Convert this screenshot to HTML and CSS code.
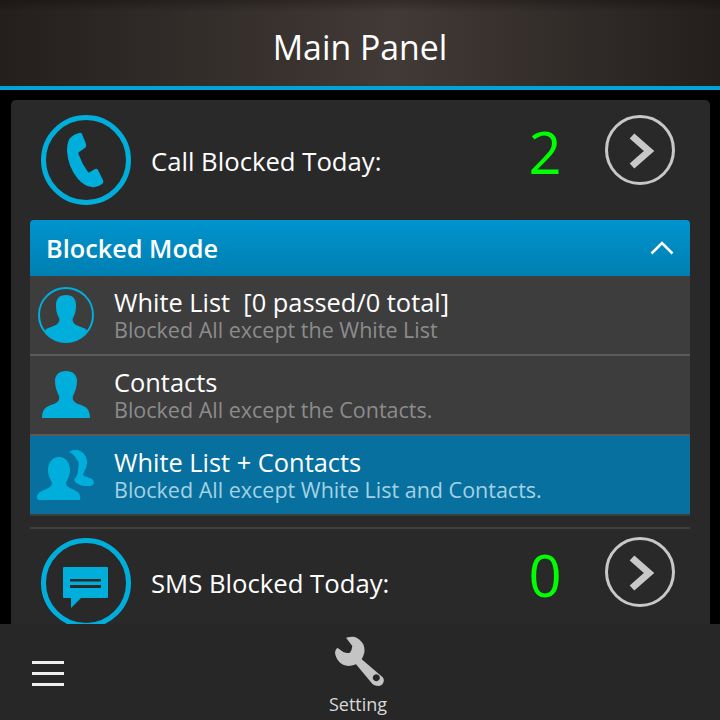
FILE: index.html
```html
<!DOCTYPE html>
<html lang="en">
  <head>
    <meta charset="UTF-8" />
    <title>Main Panel</title>
    <link rel="stylesheet" href="styles.css">
  </head>
  <body>
    <header class="title-bar">Main Panel</header>

    <main class="content">
      <div class="panel">
        <div class="stat-row">
          <svg class="stat-icon" viewBox="0 0 90 90">
            <circle cx="45" cy="45" r="42.5" fill="none" stroke="#00aedb" stroke-width="5" />
            <path fill="#00aedb" d="M29 23 Q33 19 38 18 Q40 17 41 19 L45 29 Q46 31 44 33 L38 37 Q37 38 37.5 39 Q41 49 47 57 Q48 58 49 57 L54 54 Q56 53 57 55 L62 65 Q63 68 61 69 Q56 73 51 72 Q43 71 37 64 Q27 52 26 36 Q26 27 29 23 Z" />
          </svg>
          <span class="stat-label">Call Blocked Today:</span>
          <span class="stat-count">2</span>
          <svg class="stat-arrow" viewBox="0 0 70 70">
            <circle cx="35" cy="35" r="33.5" fill="none" stroke="#c8c8c8" stroke-width="3" />
            <path fill="none" stroke="#c8c8c8" stroke-width="7" d="M27 21 L44 36 L27 51" />
          </svg>
        </div>

        <div class="mode-head">
          <span>Blocked Mode</span>
          <svg class="mode-chevron" viewBox="0 0 24 14">
            <path fill="none" stroke="#fff" stroke-width="2.6" d="M1.5 12.5 L12 2 L22.5 12.5" />
          </svg>
        </div>

        <div class="mode-row">
          <svg class="mode-icon" viewBox="0 0 60 60">
            <defs>
              <clipPath id="ringClip"><circle cx="30" cy="30" r="27.5" /></clipPath>
            </defs>
            <circle cx="30" cy="30" r="27" fill="none" stroke="#00aedb" stroke-width="2" />
            <path clip-path="url(#ringClip)" fill="#00aedb" d="M30 10 C37 10 40 14 40 20 C40 26 39 29 37 33 C36 36 37 38 40 40 L50 44 L56 60 L4 60 L10 44 L20 40 C23 38 24 36 23 33 C21 29 20 26 20 20 C20 14 23 10 30 10 Z" />
          </svg>
          <div class="mode-text">
            <div class="mode-title">White List&nbsp; [0 passed/0 total]</div>
            <div class="mode-desc">Blocked All except the White List</div>
          </div>
        </div>

        <div class="mode-row">
          <svg class="mode-icon" viewBox="0 0 60 60">
            <path fill="#00aedb" d="M30 6 C37 6 41 10 41 16 C41 22 39 27 37 31 C36 35 38 37 42 39 C49 41 54 43 54 53 L6 53 C6 43 11 41 18 39 C22 37 24 35 23 31 C21 27 19 22 19 16 C19 10 23 6 30 6 Z" />
          </svg>
          <div class="mode-text">
            <div class="mode-title">Contacts</div>
            <div class="mode-desc">Blocked All except the Contacts.</div>
          </div>
        </div>

        <div class="mode-row selected">
          <svg class="mode-icon" viewBox="0 0 60 60">
            <path fill="#00aedb" d="M33 7 Q37 4 42 5 C48 7 51 12 51 17 C51 23 48 26 47 30 C50 33 55 32 57 35 C59 38 57 41 54 41 C50 41 46 41 44 40 C41 39 39 37 38 35 C41 31 42 28 42 25 C43 20 43 16 41 15 C39 11 36 8 33 7 Z" />
            <path fill="#00aedb" d="M23 12 C30 12 34 18 34 25 C34 31 31 35 30 38 C30 42 35 43 40 46 C44 48 45 52 44 55 L3 55 C0 54 0 50 4 47 C9 44 16 43 16 38 C15 35 12 31 12 25 C12 18 16 12 23 12 Z" />
          </svg>
          <div class="mode-text">
            <div class="mode-title">White List + Contacts</div>
            <div class="mode-desc">Blocked All except White List and Contacts.</div>
          </div>
        </div>

        <div class="divider"></div>

        <div class="stat-row sms">
          <svg class="stat-icon" viewBox="0 0 90 90">
            <circle cx="45" cy="45" r="42.5" fill="none" stroke="#00aedb" stroke-width="5" />
            <path fill="#00aedb" fill-rule="evenodd" d="M23 29 L66 29 Q67 29 67 30 L67 59 Q67 60 66 60 L40 60 L30 70 L30 60 L23 60 Q22 60 22 59 L22 30 Q22 29 23 29 Z M29 41 L29 43.5 L60 43.5 L60 41 Z M29 47 L29 50 L60 50 L60 47 Z" />
          </svg>
          <span class="stat-label">SMS Blocked Today:</span>
          <span class="stat-count">0</span>
          <svg class="stat-arrow" viewBox="0 0 70 70">
            <circle cx="35" cy="35" r="33.5" fill="none" stroke="#c8c8c8" stroke-width="3" />
            <path fill="none" stroke="#c8c8c8" stroke-width="7" d="M27 21 L44 36 L27 51" />
          </svg>
        </div>
      </div>
    </main>

    <footer class="action-bar">
      <div class="menu-btn">
        <span></span>
        <span></span>
        <span></span>
      </div>
      <div class="action">
        <svg class="action-icon" viewBox="-2 0 52 52">
          <path fill="#c4c4c4" fill-rule="evenodd" d="M12 1.7 Q17 0.5 21 1 Q26 3 29.3 8.3 Q31 12 30.3 16.7 Q29.5 20 27.7 23.3 L49 41.5 Q50.5 44 49.3 46.7 Q47.5 50 44.3 50 Q41 50 38.7 48.3 L22 28.3 Q18 30 14.3 30 Q9 29.5 6 26.7 Q1.5 22 1 16.7 Q1 14 3.3 11.7 L9.3 16 Q13 17.5 16 16.7 Q18 14 18.3 10 Z M42.3 38.2 A3.5 3.5 0 1 0 42.31 38.2 Z" />
        </svg>
        <span class="action-label">Setting</span>
      </div>
    </footer>
  </body>
</html>
```

FILE: styles.css
```css
* {
  box-sizing: border-box;
}
body {
  margin: 0;
  width: 720px;
  height: 720px;
  display: flex;
  flex-direction: column;
  overflow: hidden;
  background-color: #000;
  color: #fff;
  font-family: "Open Sans", sans-serif;
}
.title-bar {
  height: 90px;
  flex: none;
  border-bottom: 4px solid #00a5d6;
  background: linear-gradient(to bottom, rgba(0, 0, 0, 0.25), rgba(0, 0, 0, 0) 12px), linear-gradient(to right, #241f1d, #413a37 55%, #241f1d);
  font-size: 33.8px;
  line-height: 95px;
  text-align: center;
}
.content {
  flex: 1;
  min-height: 0;
  overflow: hidden;
  padding: 10px 10px 0 11px;
}
.panel {
  height: 600px;
  padding: 0 20px 0 19px;
  border-radius: 5px 5px 0 0;
  background-color: #292929;
}
.stat-row {
  height: 120px;
  padding-top: 15px;
  padding-left: 11px;
  display: flex;
  align-items: flex-start;
}
.stat-row.sms {
  padding-top: 9px;
}
.stat-icon {
  width: 90px;
  height: 90px;
  flex: none;
}
.stat-label {
  margin-left: 20px;
  flex: 1;
  font-size: 25.7px;
  line-height: 34px;
  padding-top: 30px;
}
.sms .stat-label {
  padding-top: 29px;
}
.stat-count {
  width: 60px;
  margin-right: 29.5px;
  margin-top: -2px;
  text-align: center;
  color: #00ff00;
  font-size: 58px;
  line-height: 78px;
}
.stat-arrow {
  width: 70px;
  height: 70px;
  flex: none;
  margin-right: 15.5px;
}
.sms .stat-arrow {
  margin-top: -1px;
}
.mode-head {
  height: 56px;
  padding: 0 16px;
  display: flex;
  align-items: center;
  justify-content: space-between;
  border-radius: 4px 4px 0 0;
  background: linear-gradient(#0094ce, #007fb2);
  font-size: 25.3px;
  font-weight: 600;
}
.mode-chevron {
  width: 24px;
  height: 14px;
}
.mode-row {
  height: 80px;
  padding-left: 6px;
  display: flex;
  align-items: center;
  border-bottom: 2px solid #5a5a5a;
  background-color: #3d3d3d;
}
.mode-row.selected {
  border-bottom-color: #3d3d3d;
  background-color: #08709e;
}
.mode-icon {
  width: 60px;
  height: 60px;
  flex: none;
}
.mode-text {
  margin-left: 18px;
}
.mode-title {
  font-size: 25.4px;
  line-height: 30px;
}
.mode-desc {
  font-size: 21.5px;
  line-height: 26px;
  color: #8c8c8c;
}
.selected .mode-desc {
  color: #a3d2e3;
}
.divider {
  height: 2px;
  margin-top: 11px;
  background-color: #3f3f3f;
}
.action-bar {
  height: 96px;
  flex: none;
  display: flex;
  background-color: #272727;
}
.menu-btn {
  width: 32px;
  margin: 37px 0 0 32px;
  display: flex;
  flex-direction: column;
  gap: 8px;
}
.menu-btn span {
  height: 3px;
  background-color: #eee;
}
.action {
  width: 100px;
  margin-left: 244px;
  padding-top: 12px;
  display: flex;
  flex-direction: column;
  align-items: center;
}
.action-icon {
  width: 52px;
  height: 52px;
}
.action-label {
  margin-top: 4px;
  font-size: 18px;
  color: #d8d8d8;
}
```
